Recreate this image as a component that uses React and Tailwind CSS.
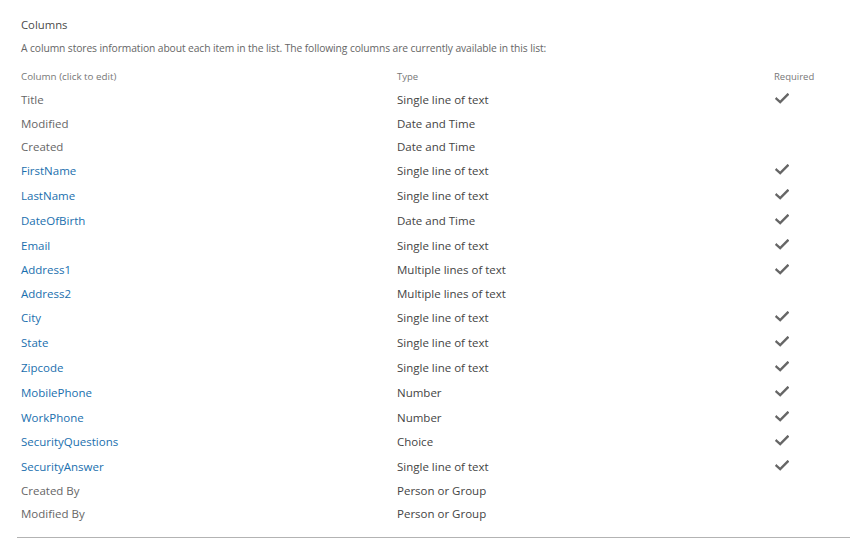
const rows = [
  { name: 'Title', type: 'Single line of text', required: true, link: false },
  { name: 'Modified', type: 'Date and Time', required: false, link: false },
  { name: 'Created', type: 'Date and Time', required: false, link: false },
  { name: 'FirstName', type: 'Single line of text', required: true, link: true },
  { name: 'LastName', type: 'Single line of text', required: true, link: true },
  { name: 'DateOfBirth', type: 'Date and Time', required: true, link: true },
  { name: 'Email', type: 'Single line of text', required: true, link: true },
  { name: 'Address1', type: 'Multiple lines of text', required: true, link: true },
  { name: 'Address2', type: 'Multiple lines of text', required: false, link: true },
  { name: 'City', type: 'Single line of text', required: true, link: true },
  { name: 'State', type: 'Single line of text', required: true, link: true },
  { name: 'Zipcode', type: 'Single line of text', required: true, link: true },
  { name: 'MobilePhone', type: 'Number', required: true, link: true },
  { name: 'WorkPhone', type: 'Number', required: true, link: true },
  { name: 'SecurityQuestions', type: 'Choice', required: true, link: true },
  { name: 'SecurityAnswer', type: 'Single line of text', required: true, link: true },
  { name: 'Created By', type: 'Person or Group', required: false, link: false },
  { name: 'Modified By', type: 'Person or Group', required: false, link: false },
];

// checkmark used in the "Required" column
const Check = () => (
  <svg width="14" height="11" viewBox="0 0 14 11" className="block">
    <path d="M1.5 5.8 L5.2 9.2 L12.6 1.6" fill="none" stroke="#666666" strokeWidth="2.4" strokeLinecap="square" />
  </svg>
);

export default function App() {
  return (
    <div className="w-[850px] h-[547px] bg-white overflow-hidden pt-[16px] font-['Open_Sans',sans-serif]">
      <div className="pl-[21px]">
        <h2 className="h-[18px] leading-[18px] text-[11.3px] text-[#4a4a4a]">Columns</h2>
        <p className="mt-[5px] h-[18px] leading-[18px] text-[10.3px] text-[#666666] tracking-[-0.1px]">
          A column stores information about each item in the list. The following columns are currently available in this list:
        </p>

        <div className="mt-[10.5px] grid grid-cols-[376px_377px_1fr] h-[20px] items-center text-[9.8px] text-[#777777]">
          <span>Column (click to edit)</span>
          <span className="text-[9.5px]">Type</span>
          <span className="text-[9.5px]">Required</span>
        </div>

        {rows.map((row) => (
          <div
            key={row.name}
            className={`grid grid-cols-[376px_377px_1fr] items-center text-[11.5px] ${row.required ? 'h-[24.8px]' : 'h-[23.1px]'}`}
          >
            <a className={row.link ? 'text-[#1a6fae] cursor-pointer' : 'text-[#666666]'}>{row.name}</a>
            <span className="text-[#444444]">{row.type}</span>
            <span className="pl-[1px] -mt-[2px]">{row.required && <Check />}</span>
          </div>
        ))}
      </div>

      <div className="ml-[17px] mt-[12px] border-t-[1.5px] border-[#b3b3b3]" />
    </div>
  );
}
